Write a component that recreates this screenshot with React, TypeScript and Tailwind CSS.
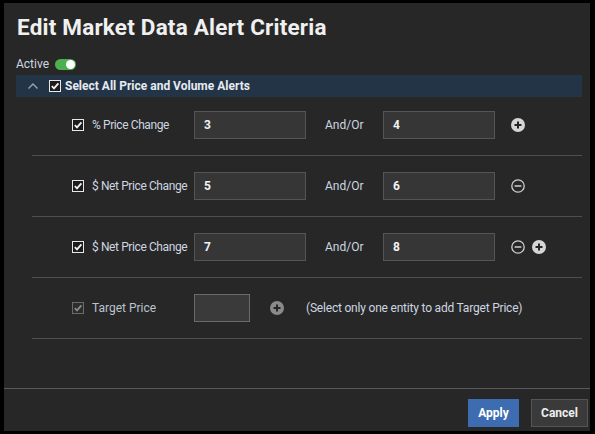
import React from "react";

type Row = {
  label: string;
  a: string;
  b: string;
  icons: ("plus" | "minus")[];
};

const rows: Row[] = [
  { label: "% Price Change", a: "3", b: "4", icons: ["plus"] },
  { label: "$ Net Price Change", a: "5", b: "6", icons: ["minus"] },
  { label: "$ Net Price Change", a: "7", b: "8", icons: ["minus", "plus"] },
];

function CheckBox({ muted = false }: { muted?: boolean }) {
  return (
    <span
      className={
        "flex h-[12px] w-[12px] shrink-0 items-center justify-center border " +
        (muted ? "border-[#6a6a6a] bg-[#2c2c2c]" : "border-[#e8e8e8] bg-[#1c1c1c]")
      }
    >
      <svg width="10" height="10" viewBox="0 0 10 10">
        <path
          d="M1.8 5.2 L4 7.4 L8.4 2.4"
          fill="none"
          stroke={muted ? "#8a8a8a" : "#f2f2f2"}
          strokeWidth="1.8"
        />
      </svg>
    </span>
  );
}

function PlusIcon({ color = "#d6d6d6" }: { color?: string }) {
  return (
    <svg width="14" height="14" viewBox="0 0 14 14">
      <circle cx="7" cy="7" r="7" fill={color} />
      <path d="M7 3.5 V10.5 M3.5 7 H10.5" stroke="#262626" strokeWidth="2" />
    </svg>
  );
}

function MinusIcon() {
  return (
    <svg width="14" height="14" viewBox="0 0 14 14">
      <circle cx="7" cy="7" r="6.2" fill="none" stroke="#d0d0d0" strokeWidth="1.3" />
      <path d="M3.6 7 H10.4" stroke="#d0d0d0" strokeWidth="1.5" />
    </svg>
  );
}

function ValueInput({ value }: { value: string }) {
  return (
    <div className="flex h-[28px] w-[112px] shrink-0 items-center border border-[#555] bg-[#363636] pl-[9px] text-[12px] font-bold text-[#eef2f6]">
      {value}
    </div>
  );
}

export default function App() {
  return (
    <div
      className="h-[434px] w-[595px] bg-black pb-[3px] pl-[4px] pr-[5px] pt-[3px] text-[#cdd6e0]"
      style={{ fontFamily: "Roboto, 'Liberation Sans', sans-serif" }}
    >
      <div className="flex h-full flex-col bg-[#272727]">
        <h1 className="pl-[13px] pt-[11px] text-[22.5px] font-bold leading-[26px] tracking-[0.2px] text-[#f0f0f0]">
          Edit Market Data Alert Criteria
        </h1>

        <div className="mt-[17px] flex items-center gap-[6px] pl-[12px] text-[12px] leading-[14px]">
          <span>Active</span>
          <span className="flex h-[11px] w-[21px] items-center justify-end rounded-full bg-[#4caf50] pr-[1px]">
            <span className="h-[9px] w-[9px] rounded-full bg-white" />
          </span>
        </div>

        <div className="ml-[12px] mr-[8px] mt-[4px] flex h-[22px] items-center bg-[#243447]">
          <svg width="12" height="8" viewBox="0 0 12 8" className="ml-[11px]">
            <path d="M1.5 6.5 L6 2 L10.5 6.5" fill="none" stroke="#9aa3ad" strokeWidth="1.4" />
          </svg>
          <span className="ml-[10px]">
            <CheckBox />
          </span>
          <span className="ml-[4px] whitespace-nowrap text-[12px] font-bold text-[#e6ebf0]">
            Select All Price and Volume Alerts
          </span>
        </div>

        <div className="ml-[28px] mr-[8px]">
          {rows.map((r, i) => (
            <div
              key={i}
              className={
                "flex items-center border-b border-[#4e4e4e] pb-[16px] " +
                (i === 0 ? "pt-[14px]" : "pt-[16px]")
              }
            >
              <span className="ml-[40px]">
                <CheckBox />
              </span>
              <span className="ml-[8px] w-[102px] shrink-0 whitespace-nowrap text-[12px] tracking-[-0.4px]">
                {r.label}
              </span>
              <ValueInput value={r.a} />
              <span className="ml-[19px] w-[58px] shrink-0 text-[12px]">And/Or</span>
              <ValueInput value={r.b} />
              <div className="ml-[16px] flex items-center gap-[7px]">
                {r.icons.map((ic, k) =>
                  ic === "plus" ? <PlusIcon key={k} /> : <MinusIcon key={k} />
                )}
              </div>
            </div>
          ))}

          <div className="flex items-center border-b border-[#4e4e4e] pb-[16px] pt-[16px]">
            <span className="ml-[40px]">
              <CheckBox muted />
            </span>
            <span className="ml-[8px] w-[102px] shrink-0 whitespace-nowrap text-[12px] text-[#b9c4cf]">
              Target Price
            </span>
            <div className="h-[28px] w-[56px] shrink-0 border border-[#6a6a6a] bg-[#3a3a3a]" />
            <span className="ml-[20px]">
              <PlusIcon color="#8a8a8a" />
            </span>
            <span className="ml-[22px] whitespace-nowrap text-[12px] tracking-[-0.2px]">
              (Select only one entity to add Target Price)
            </span>
          </div>
        </div>

        <div className="flex-1" />

        <div className="flex justify-end gap-[12px] border-t border-[#5a5a5a] pb-[4px] pr-[2px] pt-[10px]">
          <button className="h-[28px] w-[51px] bg-[#3e6cb0] text-[12px] font-bold text-white">
            Apply
          </button>
          <button className="h-[28px] w-[57px] border border-[#555] bg-[#3a3a3a] text-[12px] font-bold text-[#eee]">
            Cancel
          </button>
        </div>
      </div>
    </div>
  );
}
